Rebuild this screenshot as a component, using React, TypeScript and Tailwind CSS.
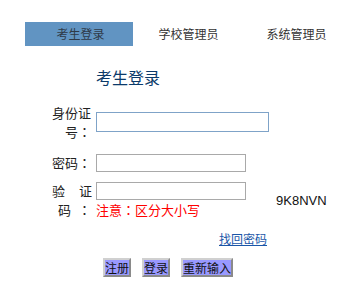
import React from "react";

const cjk = { fontFamily: '"Noto Sans CJK SC", "Liberation Sans", sans-serif' };
const tc = { fontFamily: '"Noto Sans CJK TC", "Noto Sans CJK SC", sans-serif' };

function Colon() {
  return <span style={tc}>：</span>;
}

export default function App() {
  return (
    <div className="w-[351px] h-[286px] bg-white text-[#222]" style={cjk}>
      <div className="flex pt-[22px] pl-[25px]">
        <div className="w-[108px] h-[24px] bg-[#6194c2] flex items-center justify-center pl-[3px] text-[12px] text-[#2f3a48]">
          考生登录
        </div>
        <div className="w-[108px] h-[24px] flex items-center justify-center pl-[3px] text-[12px] text-[#333]">
          学校管理员
        </div>
        <div className="w-[108px] h-[24px] flex items-center justify-center pl-[3px] text-[12px] text-[#333]">
          系统管理员
        </div>
      </div>

      <div className="mt-[21px] pl-[96px] text-[16px] leading-[20px] text-[#0b3a6a]">考生登录</div>

      <div className="mt-[16px] flex pl-[52px] items-center text-[13px] leading-[19px]">
        <div className="w-[44px]">
          <div>身份证</div>
          <div className="pl-[13px]">
            号<Colon />
          </div>
        </div>
        <input
          className="w-[173px] h-[20px] border border-[#7fa3c8] bg-white outline-none"
          type="text"
        />
      </div>

      <div className="mt-[12px] flex pl-[52px] items-center text-[13px] leading-[19px]">
        <div className="w-[44px]">
          密码<Colon />
        </div>
        <input
          className="w-[150px] h-[18px] border border-[#a9a9a9] bg-white outline-none"
          type="password"
        />
      </div>

      <div className="mt-[9px] flex pl-[52px] items-center text-[13px] leading-[19px]">
        <div className="w-[44px]">
          <div className="flex w-[40px] justify-between">
            <span>验</span>
            <span>证</span>
          </div>
          <div className="flex pl-[6px]">
            <span>码</span>
            <span className="ml-[7px]" style={tc}>：</span>
          </div>
        </div>
        <div className="flex flex-col w-[150px]">
          <input
            className="w-[150px] h-[18px] mt-[1px] border border-[#a9a9a9] bg-white outline-none"
            type="text"
          />
          <div className="text-[#ff0000] whitespace-nowrap">
            注意<Colon />区分大小写
          </div>
        </div>
        <div
          className="ml-[30px] text-[13px] text-[#111]"
          style={{ fontFamily: '"Liberation Sans", sans-serif' }}
        >
          9K8NVN
        </div>
      </div>

      <div className="mt-[12px] pl-[219px] text-[12px] leading-[16px]">
        <a href="#" className="text-[#1a56a8] underline">
          找回密码
        </a>
      </div>

      <div className="mt-[11px] flex pl-[103px] gap-[11px] text-[12px] leading-[15px]">
        <button className="bg-[#9999ff] border-2 border-t-[#d0d0d0] border-l-[#d0d0d0] border-b-[#8a8a8a] border-r-[#8a8a8a] text-[#111]">
          注册
        </button>
        <button className="bg-[#9999ff] border-2 border-t-[#d0d0d0] border-l-[#d0d0d0] border-b-[#8a8a8a] border-r-[#8a8a8a] text-[#111]">
          登录
        </button>
        <button className="bg-[#9999ff] border-2 border-t-[#d0d0d0] border-l-[#d0d0d0] border-b-[#8a8a8a] border-r-[#8a8a8a] text-[#111]">
          重新输入
        </button>
      </div>
    </div>
  );
}
